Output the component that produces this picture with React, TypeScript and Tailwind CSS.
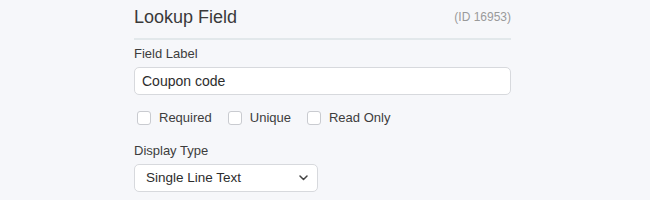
const Check = ({ label }: { label: string }) => (
  <label className="flex items-center gap-[8px]">
    <span className="h-[14px] w-[14px] rounded-[3px] border border-[#c9cbd0] bg-white" />
    <span className="text-[13px] text-[#3d3d3d]">{label}</span>
  </label>
)

export default function App() {
  return (
    <div className="h-[200px] w-[650px] bg-[#f6f7fa]" style={{ fontFamily: '"Liberation Sans", Arial, sans-serif' }}>
      <div className="ml-[134px] w-[377px]">
        <div className="flex h-[40px] items-center justify-between border-b-2 border-[#e2e8eb] pb-[4px]">
          <h1 className="text-[18px] leading-none text-[#3a3a3a]">Lookup Field</h1>
          <span className="text-[12px] text-[#9a9a9a]">(ID 16953)</span>
        </div>
        <div className="pt-[5px] text-[13px] leading-[18px] text-[#3d3d3d]">Field Label</div>
        <div className="mt-[4px] flex h-[28px] items-center rounded-[5px] border border-[#d7d9dd] bg-white px-[7px] text-[14px] text-[#2d2d2d]">
          Coupon code
        </div>
        <div className="mt-[13px] flex h-[20px] items-center gap-[16px] pl-[3px]">
          <Check label="Required" />
          <Check label="Unique" />
          <Check label="Read Only" />
        </div>
        <div className="pt-[14px] text-[13px] leading-[18px] text-[#3d3d3d]">Display Type</div>
        <div className="mt-[4px] flex h-[28px] w-[184px] items-center justify-between rounded-[5px] border border-[#d7d9dd] bg-white pl-[11px] pr-[9px] text-[13.5px] text-[#2d2d2d]">
          <span>Single Line Text</span>
          <svg width="9" height="6" viewBox="0 0 9 6" fill="none">
            <path d="M1 1l3.5 3.5L8 1" stroke="#444" strokeWidth="1.5" strokeLinecap="round" strokeLinejoin="round" />
          </svg>
        </div>
      </div>
    </div>
  )
}
